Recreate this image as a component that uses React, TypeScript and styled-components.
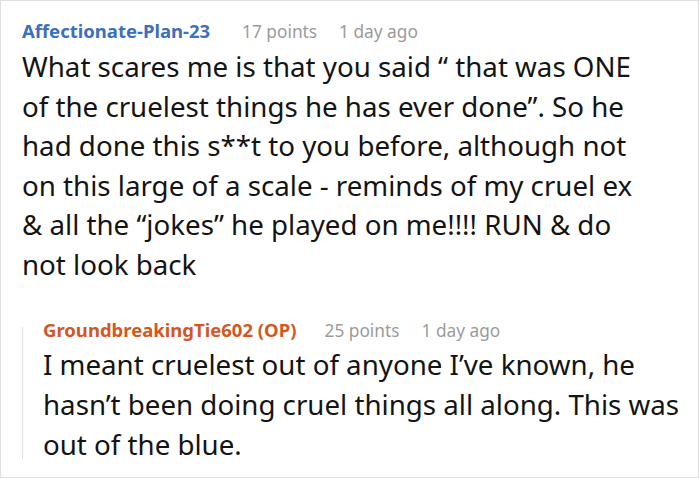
import styled, { createGlobalStyle } from "styled-components";

const Global = createGlobalStyle`
  html, body {
    margin: 0;
    padding: 0;
    background: #ffffff;
  }
  body {
    font-family: "Noto Sans", "Open Sans", sans-serif;
  }
`;

const Card = styled.section`
  box-sizing: border-box;
  width: 699px;
  height: 478px;
  border: 1px solid #e0e0e0;
  padding: 15px 10px 0 21px;
  background: #ffffff;
`;

const Header = styled.div<{ $compact?: boolean }>`
  display: flex;
  align-items: baseline;
  font-size: 17.3px;
  line-height: ${(p) => (p.$compact ? "26px" : "30px")};
`;

const Author = styled.span<{ $op?: boolean }>`
  font-weight: 700;
  font-size: 18.5px;
  color: ${(p) => (p.$op ? "#d3581f" : "#3c6fbe")};
`;

const Points = styled.span<{ $gap: number }>`
  margin-left: ${(p) => p.$gap}px;
  color: #9b9b9b;
`;

const When = styled.span`
  margin-left: 22px;
  color: #9b9b9b;
`;

const Body = styled.p<{ $narrow?: boolean }>`
  margin: 0;
  max-width: ${(p) => (p.$narrow ? "620px" : "none")};
  font-size: 27.7px;
  line-height: ${(p) => (p.$narrow ? "39.5px" : "40px")};
  color: #141414;
`;

const Reply = styled.div`
  position: relative;
  margin-top: 33px;
  padding-left: 21px;

  &::before {
    content: "";
    position: absolute;
    left: 0;
    top: 10px;
    bottom: 5px;
    width: 1px;
    background: #e2e2e2;
  }
`;

type CommentProps = {
  author: string;
  points: number;
  when: string;
  text: string;
  op?: boolean;
};

const Comment = ({ author, points, when, text, op }: CommentProps) => (
  <>
    <Header $compact={op}>
      <Author $op={op}>{author}</Author>
      <Points $gap={op ? 28 : 32}>{points} points</Points>
      <When>{when}</When>
    </Header>
    <Body $narrow={!op}>{text}</Body>
  </>
);

export default function App() {
  return (
    <>
      <Global />
      <Card>
        <Comment
          author="Affectionate-Plan-23"
          points={17}
          when="1 day ago"
          text="What scares me is that you said “ that was ONE of the cruelest things he has ever done”. So he had done this s**t to you before, although not on this large of a scale - reminds of my cruel ex & all the “jokes” he played on me!!!! RUN & do not look back"
        />
        <Reply>
          <Comment
            op
            author="GroundbreakingTie602 (OP)"
            points={25}
            when="1 day ago"
            text="I meant cruelest out of anyone I’ve known, he hasn’t been doing cruel things all along. This was out of the blue."
          />
        </Reply>
      </Card>
    </>
  );
}
